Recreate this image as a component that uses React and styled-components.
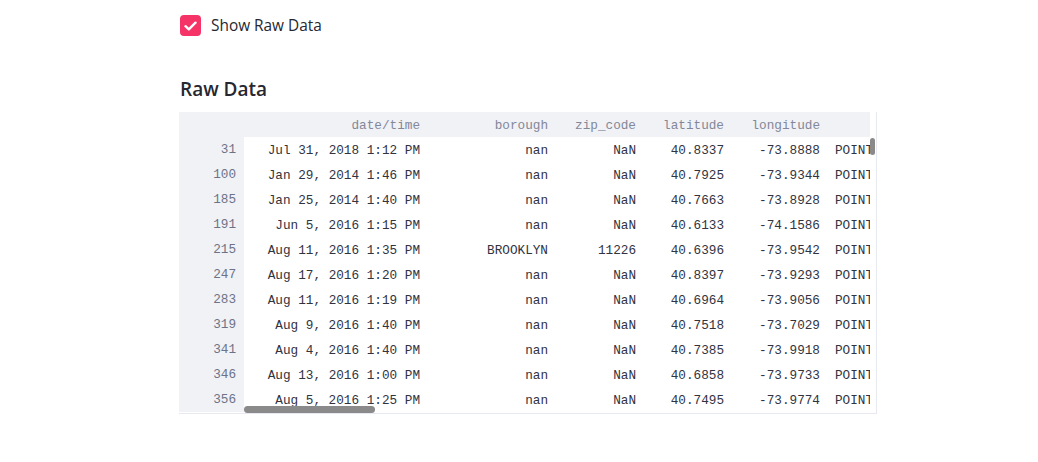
import React from 'react';
import styled, { createGlobalStyle } from 'styled-components';

const GlobalStyle = createGlobalStyle`
  body {
    margin: 0;
    background: #ffffff;
    font-family: "Open Sans", "Noto Sans", sans-serif;
    color: #262730;
  }
`;

const Page = styled.div`
  padding: 15px 0 0 179px;
  width: 698px;
`;

const CheckRow = styled.label`
  display: flex;
  align-items: center;
  gap: 10px;
  height: 21px;
  line-height: 21px;
  padding-left: 1px;
  font-size: 15.4px;
  color: #262730;
`;

const CheckBox = styled.span`
  flex: 0 0 21px;
  width: 21px;
  height: 21px;
  border-radius: 4px;
  background: #f63366;
  display: flex;
  align-items: center;
  justify-content: center;
`;

const Heading = styled.h3`
  margin: 39px 0 9px 1px;
  height: 28px;
  font-size: 19px;
  font-weight: 600;
  line-height: 28px;
  color: #262730;
`;

const Frame = styled.div`
  position: relative;
  width: 698px;
  height: 302px;
  border-right: 1px solid #e6e9ef;
  border-bottom: 1px solid #e6e9ef;
  box-sizing: border-box;
  overflow: hidden;
  font-family: "Liberation Mono", "DejaVu Sans Mono", monospace;
  font-size: 12.7px;
`;

const Grid = styled.div`
  width: 691px;
  overflow: hidden;
`;

const Row = styled.div`
  display: flex;
  height: 25px;
  align-items: center;
  background: ${p => (p.$head ? '#f0f2f6' : '#ffffff')};
  color: ${p => (p.$head ? '#838799' : '#31333f')};
  white-space: nowrap;
`;

const IndexCell = styled.div`
  flex: 0 0 65px;
  height: 100%;
  line-height: 26px;
  box-sizing: border-box;
  padding-right: 8px;
  text-align: right;
  background: #f0f2f6;
  color: #6d7287;
`;

const Cell = styled.div`
  flex: 0 0 ${p => p.$w}px;
  box-sizing: border-box;
  padding: ${p => (p.$left ? '1px 0 0 7px' : '1px 8px 0 0')};
  text-align: ${p => (p.$left ? 'left' : 'right')};
  overflow: hidden;
`;

const VThumb = styled.div`
  position: absolute;
  right: 1px;
  top: 26px;
  width: 5px;
  height: 17px;
  border-radius: 3px;
  background: #8a8a8a;
`;

const HThumb = styled.div`
  position: absolute;
  left: 65px;
  bottom: 0;
  width: 131px;
  height: 7px;
  border-radius: 4px;
  background: #8a8a8a;
`;

const widths = [184, 128, 88, 88, 96, 140];
const headers = ['date/time', 'borough', 'zip_code', 'latitude', 'longitude', ''];

const rows = [
  ['31', 'Jul 31, 2018 1:12 PM', 'nan', 'NaN', '40.8337', '-73.8888'],
  ['100', 'Jan 29, 2014 1:46 PM', 'nan', 'NaN', '40.7925', '-73.9344'],
  ['185', 'Jan 25, 2014 1:40 PM', 'nan', 'NaN', '40.7663', '-73.8928'],
  ['191', 'Jun 5, 2016 1:15 PM', 'nan', 'NaN', '40.6133', '-74.1586'],
  ['215', 'Aug 11, 2016 1:35 PM', 'BROOKLYN', '11226', '40.6396', '-73.9542'],
  ['247', 'Aug 17, 2016 1:20 PM', 'nan', 'NaN', '40.8397', '-73.9293'],
  ['283', 'Aug 11, 2016 1:19 PM', 'nan', 'NaN', '40.6964', '-73.9056'],
  ['319', 'Aug 9, 2016 1:40 PM', 'nan', 'NaN', '40.7518', '-73.7029'],
  ['341', 'Aug 4, 2016 1:40 PM', 'nan', 'NaN', '40.7385', '-73.9918'],
  ['346', 'Aug 13, 2016 1:00 PM', 'nan', 'NaN', '40.6858', '-73.9733'],
  ['356', 'Aug 5, 2016 1:25 PM', 'nan', 'NaN', '40.7495', '-73.9774'],
];

export default function App() {
  return (
    <Page>
      <GlobalStyle />
      <CheckRow>
        <CheckBox>
          <svg width="13" height="10" viewBox="0 0 13 10">
            <path d="M1.5 5.2 L4.8 8.3 L11.5 1.7" fill="none" stroke="#fff" strokeWidth="2.4" strokeLinecap="round" strokeLinejoin="round" />
          </svg>
        </CheckBox>
        Show Raw Data
      </CheckRow>
      <Heading>Raw Data</Heading>
      <Frame>
        <Grid>
          <Row $head>
            <IndexCell />
            {headers.map((h, i) => (
              <Cell key={i} $w={widths[i]} $left={i === 5}>{h}</Cell>
            ))}
          </Row>
          {rows.map(r => (
            <Row key={r[0]}>
              <IndexCell>{r[0]}</IndexCell>
              {r.slice(1).map((v, i) => (
                <Cell key={i} $w={widths[i]}>{v}</Cell>
              ))}
              <Cell $w={widths[5]} $left>{`POINT (${r[5]} ${r[4]})`}</Cell>
            </Row>
          ))}
        </Grid>
        <VThumb />
        <HThumb />
      </Frame>
    </Page>
  );
}
